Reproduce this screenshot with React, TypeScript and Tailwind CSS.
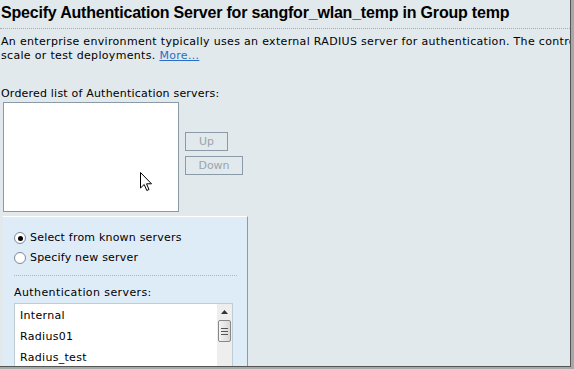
import React from 'react';

const font = { fontFamily: '"DejaVu Sans", Verdana, sans-serif' };
const titleFont = { fontFamily: '"Liberation Sans", Arial, sans-serif' };

function Cursor() {
  return (
    <svg width="13" height="20" viewBox="0 0 13 20" className="absolute left-[140px] top-[172px]">
      <path d="M0.5 0.5 L0.5 16 L4.2 12.5 L6.8 18.5 L9 17.5 L6.5 11.8 L11.5 11.8 Z" fill="white" stroke="#000" strokeWidth="1" />
    </svg>
  );
}

export default function App() {
  return (
    <div className="w-[574px] h-[369px] overflow-hidden bg-[#a8a8a8]" style={font}>
      <div className="relative w-[571px] h-[367px] overflow-hidden bg-[#e1e9ed] border-r border-b border-[#555]">
        <h1 className="pl-[1px] pt-[2px] text-[16px] leading-[22px] font-bold text-black whitespace-nowrap tracking-[-0.2px]" style={titleFont}>
          Specify Authentication Server for sangfor_wlan_temp in Group temp
        </h1>
        <div className="mt-[4px] border-t border-dotted border-[#a4adb3]" />

        <p className="mt-[6px] pl-[1px] text-[11px] leading-[14px] text-black whitespace-nowrap tracking-[0.32px]">
          An enterprise environment typically uses an external RADIUS server for authentication. The controller can be used in small
          <br />
          scale or test deployments. <span className="text-[#2c6cc4] underline">More...</span>
        </p>

        <p className="mt-[24px] pl-[1px] text-[11px] leading-[14px] text-black tracking-[0.2px]">Ordered list of Authentication servers:</p>

        <div className="flex gap-[6px] pl-[3px] mt-[1px]">
          <div className="w-[176px] h-[110px] bg-white border border-[#8a9aa6]" />
          <div className="flex flex-col gap-[5px] pt-[30px]">
            <button className="w-[43px] h-[19px] border border-[#8a9aa6] bg-[#e1e9ed] text-[11px] text-[#9aa4ab] leading-[17px]">Up</button>
            <button className="w-[58px] h-[19px] border border-[#8a9aa6] bg-[#e1e9ed] text-[11px] text-[#9aa4ab] leading-[17px]">Down</button>
          </div>
        </div>

        <div className="ml-[3px] mt-[4px] w-[245px] h-[200px] bg-[#deecf8] border-t border-t-white border-r border-r-[#7f9db5] pl-[11px] pr-[10px] pt-[11px]">
          <label className="flex items-center gap-[4px] h-[20px] text-[11px] text-black tracking-[0.2px]">
            <span className="w-[12px] h-[12px] rounded-full bg-white border border-[#7b8a96] flex items-center justify-center">
              <span className="w-[5px] h-[5px] rounded-full bg-black" />
            </span>
            Select from known servers
          </label>
          <label className="flex items-center gap-[4px] h-[20px] text-[11px] text-black tracking-[0.2px]">
            <span className="w-[12px] h-[12px] rounded-full bg-white border border-[#7b8a96]" />
            Specify new server
          </label>
          <div className="mt-[7px] border-t border-dotted border-[#a9b8c4]" />
          <p className="mt-[10px] text-[11px] leading-[14px] text-black tracking-[0.4px]">Authentication servers:</p>
          <div className="mt-[3px] w-[219px] h-[70px] bg-white border border-[#c0ccd4] flex">
            <div className="flex-1 pl-[5px] pt-[5px] text-[11px] text-black tracking-[0.3px]">
              <div className="h-[21px] leading-[14px]">Internal</div>
              <div className="h-[21px] leading-[14px]">Radius01</div>
              <div className="h-[21px] leading-[14px]">Radius_test</div>
            </div>
            <div className="w-[15px] bg-[#eeeeee] flex flex-col items-center pt-[6px]">
              <svg width="7" height="4" viewBox="0 0 7 4"><path d="M3.5 0 L7 4 L0 4 Z" fill="#333" /></svg>
              <div className="mt-[6px] w-[13px] h-[22px] rounded-[2px] border border-[#888] bg-gradient-to-r from-[#f4f4f4] to-[#d8d8d8] flex flex-col items-center justify-center gap-[2px]">
                <span className="w-[7px] h-px bg-[#555]" />
                <span className="w-[7px] h-px bg-[#555]" />
                <span className="w-[7px] h-px bg-[#555]" />
              </div>
            </div>
          </div>
        </div>
        <Cursor />
      </div>
    </div>
  );
}
